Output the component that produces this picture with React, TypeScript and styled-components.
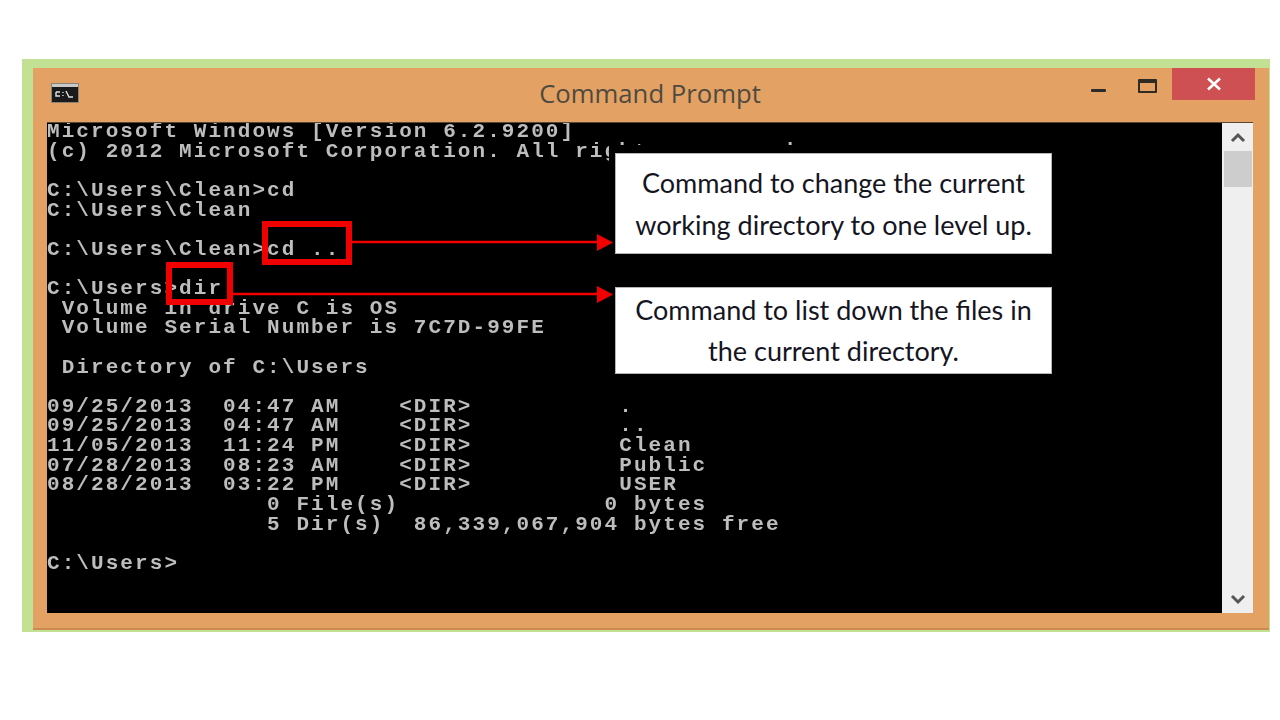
import { createGlobalStyle, styled } from 'styled-components'

const GlobalStyle = createGlobalStyle`
	html, body {
		margin: 0;
		padding: 0;
		background: #fff;
	}
`

const Page = styled.div`
	width: 1280px;
	height: 720px;
	padding: 59px 0 0 22px;
	box-sizing: border-box;
	overflow: hidden;
`
const GreenFrame = styled.div`
	width: 1248px;
	height: 573px;
	box-sizing: border-box;
	padding: 9px 1px 2px 11px;
	background: #c3e195;
`
const Window = styled.div`
	position: relative;
	height: 100%;
	display: flex;
	flex-direction: column;
	background: #e3a263;
	border-bottom: 2px solid #c98c4e;
	box-sizing: border-box;
	padding: 0 16px 15px 14px;
`
const TitleBar = styled.div`
	position: relative;
	height: 54px;
	flex: none;
	display: flex;
	align-items: flex-start;
	justify-content: center;
`
const AppIcon = styled.svg`
	position: absolute;
	left: 4px;
	top: 15px;
`
const Title = styled.div`
	margin-top: 8px;
	font-family: 'Open Sans', sans-serif;
	font-size: 25.7px;
	line-height: 36px;
	color: #4f4a40;
`
const Controls = styled.div`
	position: absolute;
	right: -2px;
	top: 0;
	display: flex;
	align-items: flex-start;
`
const Minimize = styled.div`
	width: 15px;
	height: 3px;
	margin: 21px 0 0 0;
	background: #2b2b2b;
	border-radius: 1px;
`
const Maximize = styled.div`
	width: 15px;
	height: 8px;
	margin: 11px 0 0 32px;
	border: 2px solid #2f2a24;
	border-top-width: 4px;
	border-radius: 1px;
`
const CloseButton = styled.div`
	width: 83px;
	height: 32px;
	margin-left: 15px;
	display: flex;
	align-items: center;
	justify-content: center;
	background: #cf5053;
`
const Body = styled.div`
	flex: 1;
	display: flex;
	min-height: 0;
	border-top: 1px solid #5c4630;
`
const Console = styled.div`
	position: relative;
	flex: 1;
	background: #000;
	overflow: hidden;
`
const ConsoleText = styled.pre`
	margin: -1px 0 0;
	font-family: 'Liberation Mono', monospace;
	font-size: 21px;
	font-weight: 700;
	letter-spacing: 2.07px;
	line-height: 19.63px;
	color: #bdbdbd;
	white-space: pre;
	filter: blur(0.6px);
`
const Scrollbar = styled.div`
	width: 31px;
	flex: none;
	display: flex;
	flex-direction: column;
	background: #efefef;
`
const ScrollButton = styled.div`
	height: 28px;
	flex: none;
	display: flex;
	align-items: center;
	justify-content: center;
`
const ScrollThumb = styled.div`
	width: 28px;
	height: 36px;
	flex: none;
	margin: 0 auto;
	background: #cdcdcd;
`
const ScrollTrack = styled.div`
	flex: 1;
`
const Callout = styled.div<{ $top: number; $height: number; $gap: number }>`
	position: absolute;
	left: 582px;
	top: ${p => p.$top}px;
	width: 437px;
	height: ${p => p.$height}px;
	box-sizing: border-box;
	display: flex;
	flex-direction: column;
	align-items: center;
	justify-content: center;
	gap: ${p => p.$gap}px;
	background: #fff;
	border: 1px solid #b5b5b5;
	box-shadow: -6px -8px 0 0 #000;
	font-family: 'Lato', sans-serif;
	font-size: 27px;
	line-height: 32px;
	color: #15151f;
`
const RedBox = styled.div<{ $left: number; $top: number; $width: number; $height: number }>`
	position: absolute;
	left: ${p => p.$left}px;
	top: ${p => p.$top}px;
	width: ${p => p.$width}px;
	height: ${p => p.$height}px;
	box-sizing: border-box;
	border: 6px solid #f00000;
`
const Arrow = styled.svg<{ $left: number; $top: number }>`
	position: absolute;
	left: ${p => p.$left}px;
	top: ${p => p.$top}px;
`

const lines = [
	'Microsoft Windows [Version 6.2.9200]',
	'(c) 2012 Microsoft Corporation. All rights reserved.',
	'',
	'C:\\Users\\Clean>cd',
	'C:\\Users\\Clean',
	'',
	'C:\\Users\\Clean>cd ..',
	'',
	'C:\\Users>dir',
	' Volume in drive C is OS',
	' Volume Serial Number is 7C7D-99FE',
	'',
	' Directory of C:\\Users',
	'',
	'09/25/2013  04:47 AM    <DIR>          .',
	'09/25/2013  04:47 AM    <DIR>          ..',
	'11/05/2013  11:24 PM    <DIR>          Clean',
	'07/28/2013  08:23 AM    <DIR>          Public',
	'08/28/2013  03:22 PM    <DIR>          USER',
	'               0 File(s)              0 bytes',
	'               5 Dir(s)  86,339,067,904 bytes free',
	'',
	'C:\\Users>',
]

export default function App() {
	return (
		<Page>
			<GlobalStyle />
			<GreenFrame>
				<Window>
					<TitleBar>
						<AppIcon width="28" height="20" viewBox="0 0 28 20">
							<rect x="0.5" y="0.5" width="27" height="19" fill="#1a1a1a" stroke="#8a8378" />
							<rect x="1" y="1" width="26" height="3" fill="#c9c9c9" />
							<path d="M5 9 H9 M5 9 V13 H9 M12 9 V10 M12 12 V13 M15 8 L18 14 H22" fill="none" stroke="#e0e0e0" strokeWidth="1.4" />
						</AppIcon>
						<Title>Command Prompt</Title>
						<Controls>
							<Minimize />
							<Maximize />
							<CloseButton>
								<svg width="16" height="14" viewBox="0 0 16 14">
									<path d="M2 1.5 L14 12.5 M14 1.5 L2 12.5" stroke="#fff" strokeWidth="2.6" />
								</svg>
							</CloseButton>
						</Controls>
					</TitleBar>
					<Body>
						<Console>
							<ConsoleText>{lines.join('\n')}</ConsoleText>
						</Console>
						<Scrollbar>
							<ScrollButton>
								<svg width="16" height="11" viewBox="0 0 16 11">
									<path d="M2 9 L8 3 L14 9" fill="none" stroke="#555" strokeWidth="3" />
								</svg>
							</ScrollButton>
							<ScrollThumb />
							<ScrollTrack />
							<ScrollButton>
								<svg width="16" height="11" viewBox="0 0 16 11">
									<path d="M2 2 L8 8 L14 2" fill="none" stroke="#555" strokeWidth="3" />
								</svg>
							</ScrollButton>
						</Scrollbar>
					</Body>
					<Callout $top={85} $height={101} $gap={10}>
						<div>Command to change the current</div>
						<div>working directory to one level up.</div>
					</Callout>
					<Callout $top={219} $height={87} $gap={9}>
						<div>Command to list down the files in</div>
						<div>the current directory.</div>
					</Callout>
					<RedBox $left={229} $top={153} $width={90} $height={44} />
					<RedBox $left={133} $top={194} $width={67} $height={43} />
					<Arrow $left={319} $top={165} width="262" height="20" viewBox="0 0 262 20">
						<path d="M0 9 H246" stroke="#f00000" strokeWidth="2.5" />
						<path d="M245 1 L261 9.5 L245 18 Z" fill="#f00000" />
					</Arrow>
					<Arrow $left={200} $top={217} width="381" height="20" viewBox="0 0 381 20">
						<path d="M0 9 H365" stroke="#f00000" strokeWidth="2.5" />
						<path d="M364 1 L380 9.5 L364 18 Z" fill="#f00000" />
					</Arrow>
				</Window>
			</GreenFrame>
		</Page>
	)
}
